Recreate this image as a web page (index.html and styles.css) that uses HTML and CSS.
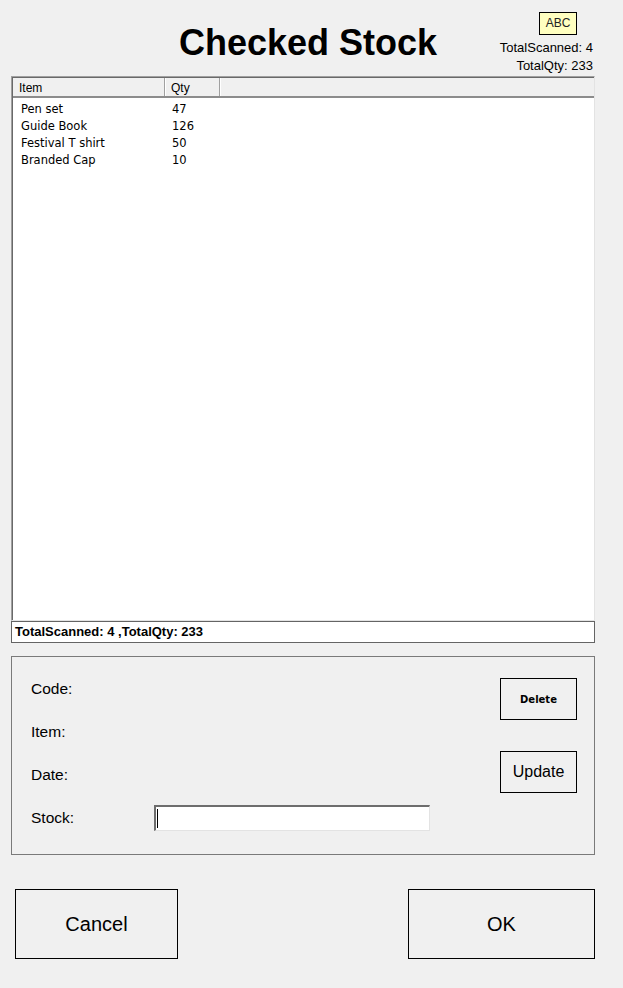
FILE: index.html
```html
<!DOCTYPE html>
<html>
<head>
    <title>Checked Stock</title>
    <link rel="stylesheet" href="styles.css">
</head>
<body>
    <div class="window">
        <div class="top">
            <div></div>
            <h1 class="title">Checked Stock</h1>
            <div class="totals">
                <span class="tag">ABC</span>
                <span class="total-line">TotalScanned: 4</span>
                <span class="total-line">TotalQty: 233</span>
            </div>
        </div>

        <div class="list">
            <div class="list-head">
                <span class="col-item">Item</span>
                <span class="col-qty">Qty</span>
                <span class="col-rest"></span>
            </div>
            <div class="list-body">
                <div class="row"><span class="cell-item">Pen set</span><span class="cell-qty">47</span></div>
                <div class="row"><span class="cell-item">Guide Book</span><span class="cell-qty">126</span></div>
                <div class="row"><span class="cell-item">Festival T shirt</span><span class="cell-qty">50</span></div>
                <div class="row"><span class="cell-item">Branded Cap</span><span class="cell-qty">10</span></div>
            </div>
        </div>
        <div class="status">TotalScanned: 4 ,TotalQty: 233</div>

        <div class="details">
            <div class="fields">
                <div class="field"><span class="label">Code:</span></div>
                <div class="field"><span class="label">Item:</span></div>
                <div class="field"><span class="label">Date:</span></div>
                <div class="field">
                    <span class="label">Stock:</span>
                    <div class="textbox"><span class="caret"></span></div>
                </div>
            </div>
            <div class="actions">
                <button class="btn btn-small btn-bold">Delete</button>
                <button class="btn btn-small">Update</button>
            </div>
        </div>

        <div class="footer">
            <button class="btn btn-big btn-cancel">Cancel</button>
            <button class="btn btn-big btn-ok">OK</button>
        </div>
    </div>
</body>
</html>
```

FILE: styles.css
```css
body {
    margin: 0;
    background-color: #f0f0f0;
    color: #000;
    font-family: "Liberation Sans", Arial, sans-serif;
}
.window {
    width: 584px;
    padding: 0 28px 0 11px;
}

/* header */
.top {
    height: 76px;
    display: grid;
    grid-template-columns: 1fr auto 1fr;
}
.title {
    margin: 0;
    padding: 23px 0 0 10px;
    font-size: 36px;
    line-height: 40px;
    font-weight: bold;
}
.totals {
    display: flex;
    flex-direction: column;
    align-items: flex-end;
    padding: 12px 2px 0 0;
    font-size: 13px;
}
.tag {
    width: 36px;
    height: 21px;
    margin-right: 16px;
    margin-bottom: 4px;
    border: 1px solid #000;
    background-color: #ffffc0;
    font-size: 12px;
    line-height: 21px;
    text-align: center;
    color: #222;
}
.total-line {
    line-height: 18px;
}

/* list view */
.list {
    height: 542px;
    border: 1px solid #a0a0a0;
    border-right-color: #e3e3e3;
    border-bottom-color: #e3e3e3;
    box-shadow: inset 1px 1px 0 #696969;
    background-color: #fff;
    padding: 1px 0 0 1px;
    font-family: "DejaVu Sans", Tahoma, sans-serif;
    font-size: 11.5px;
}
.list-head {
    display: flex;
    height: 18px;
    background-color: #f0f0f0;
    border-bottom: 2px solid #8c8c8c;
    line-height: 21px;
    font-family: "Liberation Sans", Arial, sans-serif;
    font-size: 12px;
}
.col-item,
.col-qty {
    padding-left: 6px;
    border-right: 1px solid #a0a0a0;
    box-shadow: 1px 0 0 #fff;
}
.col-item {
    width: 145px;
}
.col-qty {
    width: 48px;
}
.col-rest {
    flex: 1;
}
.list-body {
    padding: 3px 0 0 8px;
}
.row {
    display: flex;
    height: 17px;
    line-height: 17px;
}
.cell-item {
    width: 151px;
}

/* status strip */
.status {
    height: 20px;
    border: 1px solid #646464;
    background-color: #fff;
    padding-left: 3px;
    font-size: 13px;
    font-weight: bold;
    line-height: 20px;
}

/* details group */
.details {
    display: flex;
    justify-content: space-between;
    height: 178px;
    margin-top: 13px;
    padding: 19px 17px 0 19px;
    border: 1px solid #7a7a7a;
}
.fields {
    display: flex;
    flex-direction: column;
    gap: 17px;
}
.field {
    display: flex;
    align-items: center;
    height: 26px;
}
.label {
    width: 123px;
    font-size: 15.5px;
}
.textbox {
    width: 272px;
    height: 23px;
    border: 2px solid #6d6d6d;
    border-right: 1px solid #e3e3e3;
    border-bottom: 1px solid #e3e3e3;
    background-color: #fff;
    display: flex;
    align-items: center;
    padding-left: 1px;
}
.caret {
    width: 1px;
    height: 19px;
    background-color: #000;
}
.actions {
    display: flex;
    flex-direction: column;
    gap: 31px;
    padding-top: 2px;
}

/* buttons */
.btn {
    border: 1px solid #000;
    background-color: #f0f0f0;
    color: #000;
    padding: 0;
    font-family: "Liberation Sans", Arial, sans-serif;
}
.btn-small {
    width: 77px;
    height: 42px;
    font-size: 16px;
}
.btn-bold {
    font-family: "DejaVu Sans", Tahoma, sans-serif;
    font-size: 10px;
    font-weight: bold;
}
.footer {
    display: flex;
    justify-content: space-between;
    margin-top: 34px;
    padding: 0 0 0 4px;
}
.btn-big {
    height: 70px;
    font-size: 20px;
}
.btn-cancel {
    width: 163px;
}
.btn-ok {
    width: 187px;
}
```
